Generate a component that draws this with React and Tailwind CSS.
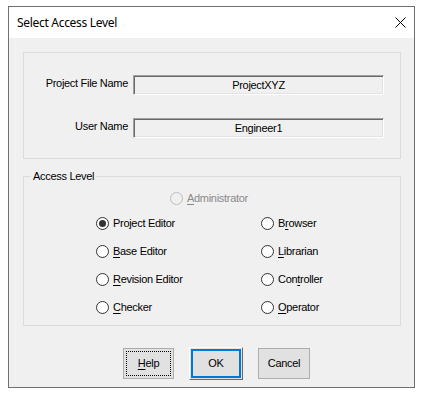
import { useState } from 'react'

const body = { fontFamily: '"Liberation Sans", Arial, sans-serif' }

function Acc({ children }) {
  return <span className="underline underline-offset-[2px] decoration-[1px]">{children}</span>
}

function Radio({ checked, disabled, onClick, children }) {
  return (
    <div className="flex items-center h-[13px] cursor-default" onClick={disabled ? undefined : onClick}>
      <div
        className={
          'w-[13px] h-[13px] rounded-full border flex items-center justify-center shrink-0 ' +
          (disabled ? 'border-[#bcbcbc] bg-[#f0f0f0]' : 'border-[#333333] bg-white')
        }
      >
        {checked && <div className="w-[7px] h-[7px] rounded-full bg-[#333333]" />}
      </div>
      <span className={'ml-[4px] leading-[13px] ' + (disabled ? 'text-[#8a8a8a]' : 'text-black')}>{children}</span>
    </div>
  )
}

function Field({ label, value }) {
  return (
    <div className="flex items-start h-[20px]">
      <div className="w-[104px] text-right leading-[13px] mt-[2px]">{label}</div>
      <div className="ml-[5px] w-[251px] h-[20px] border border-t-[#a0a0a0] border-l-[#a0a0a0] border-r-white border-b-white shadow-[inset_1px_1px_0_#696969,inset_-1px_-1px_0_#e3e3e3] flex items-center justify-center leading-[13px]">
        {value}
      </div>
    </div>
  )
}

export default function App() {
  const [level, setLevel] = useState('project')

  const left = [
    ['project', <>Project Editor</>],
    ['base', <><Acc>B</Acc>ase Editor</>],
    ['revision', <><Acc>R</Acc>evision Editor</>],
    ['checker', <><Acc>C</Acc>hecker</>],
  ]
  const right = [
    ['browser', <>B<Acc>r</Acc>owser</>],
    ['librarian', <><Acc>L</Acc>ibrarian</>],
    ['controller', <>Con<Acc>t</Acc>roller</>],
    ['operator', <><Acc>O</Acc>perator</>],
  ]

  return (
    <div className="w-[426px] h-[398px] bg-white pt-[6px] pl-[8px]">
      <div className="w-[407px] h-[382px] border border-[#707070] bg-[#f0f0f0] flex flex-col">
        <div className="h-[31px] bg-white flex items-center justify-between pl-[8px] pr-[8px]">
          <span className="text-[12px] tracking-[-0.3px] text-black" style={{ fontFamily: '"Noto Sans", "Open Sans", sans-serif' }}>
            Select Access Level
          </span>
          <svg width="11" height="11" viewBox="0 0 11 11">
            <path d="M0.5 0.5 L10.5 10.5 M10.5 0.5 L0.5 10.5" stroke="#000" strokeWidth="1" fill="none" />
          </svg>
        </div>

        <div className="flex-1 pt-[14px] pl-[14px] pr-[13px] text-[11px] tracking-[-0.3px] text-black" style={body}>
          <div className="h-[107px] border border-[#dcdcdc] pt-[22px] flex flex-col gap-[23px]">
            <Field label="Project File Name" value="ProjectXYZ" />
            <Field label="User Name" value="Engineer1" />
          </div>

          <div className="relative mt-[17px] h-[150px] border border-[#dcdcdc] pt-[15px]">
            <span className="absolute left-[7px] -top-[7px] px-[2px] bg-[#f0f0f0] leading-[13px]">Access Level</span>
            <div className="pl-[146px]">
              <Radio disabled>
                <Acc>A</Acc>dministrator
              </Radio>
            </div>
            <div className="mt-[12px] pl-[72px] grid grid-cols-[165px_1fr] gap-y-[15px]">
              {left.map(([k, t], i) => (
                <div key={k} className="contents">
                  <Radio checked={level === k} onClick={() => setLevel(k)}>{t}</Radio>
                  <Radio checked={level === right[i][0]} onClick={() => setLevel(right[i][0])}>{right[i][1]}</Radio>
                </div>
              ))}
            </div>
          </div>

          <div className="mt-[22px] flex items-start pl-[100px]">
            <button className="w-[51px] h-[31px] border border-[#adadad] bg-[#e1e1e1] p-[2px]">
              <div className="w-full h-full border border-dotted border-black flex items-center justify-center">
                <span><Acc>H</Acc>elp</span>
              </div>
            </button>
            <button className="ml-[15px] -mt-[1px] w-[54px] h-[33px] border border-t-white border-l-white border-r-[#696969] border-b-[#696969] bg-[#e1e1e1] p-[1px]">
              <div className="w-full h-full border-2 border-[#0078d7] flex items-center justify-center">OK</div>
            </button>
            <button className="ml-[15px] w-[52px] h-[31px] border border-[#adadad] bg-[#e1e1e1] flex items-center justify-center">
              Cancel
            </button>
          </div>
        </div>
      </div>
    </div>
  )
}
